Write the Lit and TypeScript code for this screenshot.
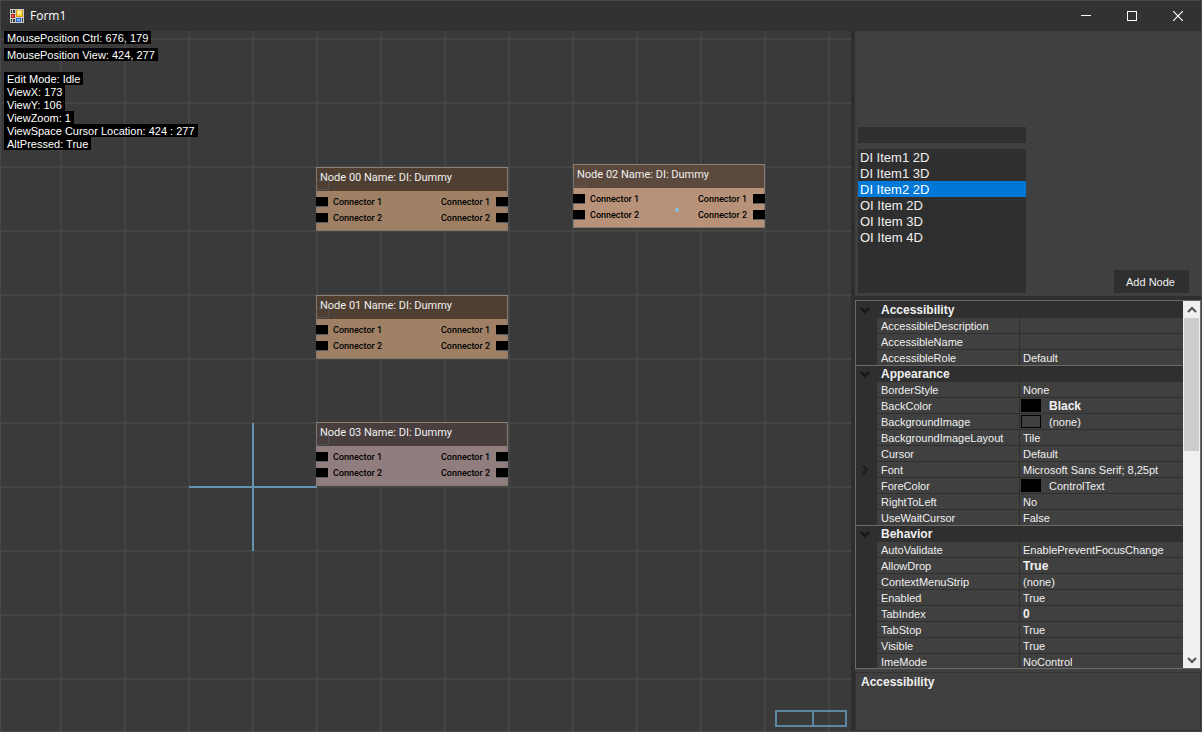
import { LitElement, html, css, svg, nothing } from "lit";
import { customElement, property } from "lit/decorators.js";
import { styleMap } from "lit/directives/style-map.js";

interface Prop {
  name: string;
  value: string;
  bold?: boolean;
  swatch?: string;
  expandable?: boolean;
}

interface Category {
  title: string;
  props: Prop[];
}

const CATEGORIES: Category[] = [
  {
    title: "Accessibility",
    props: [
      { name: "AccessibleDescription", value: "" },
      { name: "AccessibleName", value: "" },
      { name: "AccessibleRole", value: "Default" },
    ],
  },
  {
    title: "Appearance",
    props: [
      { name: "BorderStyle", value: "None" },
      { name: "BackColor", value: "Black", bold: true, swatch: "#000000" },
      { name: "BackgroundImage", value: "(none)", swatch: "transparent" },
      { name: "BackgroundImageLayout", value: "Tile" },
      { name: "Cursor", value: "Default" },
      { name: "Font", value: "Microsoft Sans Serif; 8,25pt", expandable: true },
      { name: "ForeColor", value: "ControlText", swatch: "#000000" },
      { name: "RightToLeft", value: "No" },
      { name: "UseWaitCursor", value: "False" },
    ],
  },
  {
    title: "Behavior",
    props: [
      { name: "AutoValidate", value: "EnablePreventFocusChange" },
      { name: "AllowDrop", value: "True", bold: true },
      { name: "ContextMenuStrip", value: "(none)" },
      { name: "Enabled", value: "True" },
      { name: "TabIndex", value: "0", bold: true },
      { name: "TabStop", value: "True" },
      { name: "Visible", value: "True" },
      { name: "ImeMode", value: "NoControl" },
    ],
  },
];

const NODES = [
  { title: "Node 00 Name: DI: Dummy", x: 315, y: 136, head: "#4f3f32", body: "#9f8064" },
  { title: "Node 02 Name: DI: Dummy", x: 572, y: 133, head: "#5c493d", body: "#b89278" },
  { title: "Node 01 Name: DI: Dummy", x: 315, y: 264, head: "#4f3f32", body: "#9f8064" },
  { title: "Node 03 Name: DI: Dummy", x: 315, y: 391, head: "#483e3e", body: "#907d7d" },
];

const ITEMS = ["DI Item1 2D", "DI Item1 3D", "DI Item2 2D", "OI Item 2D", "OI Item 3D", "OI Item 4D"];

const chevron = (d: string, color: string, width = 2) => html`
  <svg width="10" height="10" viewBox="0 0 10 10" aria-hidden="true">
    ${svg`<path d=${d} fill="none" stroke=${color} stroke-width=${width} />`}
  </svg>
`;

const DOWN = "M1 3L5 7L9 3";
const UP = "M1 7L5 3L9 7";
const RIGHT = "M3 1L7 5L3 9";

@customElement("title-bar")
export class TitleBar extends LitElement {
  static styles = css`
    :host {
      display: flex;
      align-items: center;
      height: 30px;
      background: #323232;
      color: #fff;
      font: 12px/16px "Open Sans", "Noto Sans", sans-serif;
    }
    .logo {
      margin: 0 6px 0 9px;
    }
    .title {
      flex: 1;
      margin: 0;
      font: inherit;
    }
    button {
      display: flex;
      align-items: center;
      justify-content: center;
      width: 46px;
      height: 30px;
      padding: 0;
      border: 0;
      background: none;
      color: inherit;
    }
  `;

  render() {
    return html`
      <svg class="logo" width="14" height="14" viewBox="0 0 14 14" aria-hidden="true">
        <rect width="14" height="14" fill="#c9c9c9" />
        <path d="M1 1h1v3H1zM3 1h2v3H3zM1 10h1v3H1zM3 10h2v3H3zM12 9h1v4h-1z" fill="#3a3a3a" />
        <rect x="1" y="5" width="4" height="4" fill="#c7261b" />
        <rect x="2" y="6" width="1" height="2" fill="#f08a7c" />
        <rect x="6" y="1" width="7" height="7" fill="#d99a10" />
        <rect x="7" y="1" width="5" height="6" fill="#ffd24a" />
        <rect x="8" y="2" width="3" height="3" fill="#fff0a8" />
        <rect x="6" y="9" width="5" height="4" fill="#2a63c8" />
        <rect x="7" y="10" width="3" height="2" fill="#7db2f5" />
      </svg>
      <h1 class="title">Form1</h1>
      <button aria-label="Minimize">
        <svg width="10" height="10" viewBox="0 0 10 10"><path d="M0 4.5H10" stroke="currentColor" /></svg>
      </button>
      <button aria-label="Maximize">
        <svg width="10" height="10" viewBox="0 0 10 10">
          <rect x=".5" y=".5" width="9" height="9" fill="none" stroke="currentColor" />
        </svg>
      </button>
      <button aria-label="Close">
        <svg width="10" height="10" viewBox="0 0 10 10">
          <path d="M0 0L10 10M10 0L0 10" stroke="currentColor" stroke-width="1.2" />
        </svg>
      </button>
    `;
  }
}

@customElement("graph-node")
export class GraphNode extends LitElement {
  @property() title = "";
  @property() head = "";
  @property() body = "";

  static styles = css`
    :host {
      display: block;
      width: 192px;
      height: 64px;
    }
    .node {
      position: relative;
      height: 64px;
      box-sizing: border-box;
      border: 1px solid #857b70;
      border-top-color: #8a7e75;
    }
    .head {
      height: 23px;
      padding: 0 3px;
      color: #f0f0f0;
      font: 11px/20px Roboto, "Open Sans", sans-serif;
    }
    .mark {
      position: absolute;
      left: -1px;
      top: 12px;
      width: 11px;
      height: 8px;
      border: 1px solid #5c6670;
      opacity: 0.5;
    }
    .rows {
      display: grid;
      grid-auto-rows: 16px;
      height: 34px;
      padding-top: 3px;
      padding-bottom: 2px;
      margin: 0 -1px;
      font: 500 9px/16px Roboto, "Open Sans", sans-serif;
      color: #000;
    }
    .row {
      display: flex;
      align-items: center;
      gap: 5px;
    }
    .label-out {
      margin-left: auto;
      padding-right: 1px;
    }
    .pin {
      width: 12px;
      height: 10px;
      box-sizing: border-box;
      background: #000;
      border-bottom: 1px solid #5c5f63;
    }
  `;

  render() {
    return html`
      <div class="node" style=${styleMap({ background: this.body })}>
        <div class="head" style=${styleMap({ background: this.head })}>${this.title}</div>
        <div class="mark"></div>
        <div class="rows">
          ${[1, 2].map(
            (n) => html`
              <div class="row">
                <span class="pin"></span>
                <span>Connector ${n}</span>
                <span class="label-out">Connector ${n}</span>
                <span class="pin"></span>
              </div>
            `
          )}
        </div>
      </div>
    `;
  }
}

@customElement("node-canvas")
export class NodeCanvas extends LitElement {
  static styles = css`
    :host {
      display: block;
      position: relative;
      overflow: hidden;
      background-color: #3a3a3a;
      background-image: linear-gradient(to right, #454545 2px, transparent 2px),
        linear-gradient(to bottom, #454545 2px, transparent 2px);
      background-size: 64px 64px;
      background-position: 59px 7px;
    }
    .axis {
      position: absolute;
      left: 188px;
      top: 392px;
    }
    .node {
      position: absolute;
    }
    .cursor {
      position: absolute;
      left: 674px;
      top: 177px;
      width: 4px;
      height: 4px;
      border-radius: 2px;
      background: #85c0e2;
    }
    .debug {
      position: absolute;
      left: 3px;
      top: 0;
      display: flex;
      flex-direction: column;
      align-items: flex-start;
      font: 11px/11px "Liberation Sans", Arial, sans-serif;
      color: #fff;
    }
    .debug span {
      padding: 2px 3px 0;
      background: #000;
    }
    .mouse {
      display: flex;
      flex-direction: column;
      align-items: flex-start;
      gap: 4px;
      margin-bottom: 11px;
    }
    .overview {
      position: absolute;
      right: 4px;
      bottom: 4px;
      display: flex;
      width: 72px;
      height: 17px;
      box-sizing: border-box;
      border: 2px solid #5b87a3;
    }
    .overview-page {
      width: 35px;
      border-right: 2px solid #5b87a3;
    }
  `;

  render() {
    return html`
      <svg class="axis" width="128" height="128" viewBox="0 0 128 128" aria-hidden="true">
        <path d="M64 0V128M0 64H128" stroke="#6594b3" stroke-width="2" />
      </svg>
      ${NODES.map(
        (n) => html`
          <graph-node
            class="node"
            style=${styleMap({ left: `${n.x}px`, top: `${n.y}px` })}
            .title=${n.title}
            .head=${n.head}
            .body=${n.body}
          ></graph-node>
        `
      )}
      <div class="cursor"></div>
      <div class="debug">
        <div class="mouse">
          <span>MousePosition Ctrl: 676, 179</span>
          <span>MousePosition View: 424, 277</span>
        </div>
        <span>Edit Mode: Idle</span>
        <span>ViewX: 173</span>
        <span>ViewY: 106</span>
        <span>ViewZoom: 1</span>
        <span>ViewSpace Cursor Location: 424 : 277</span>
        <span>AltPressed: True</span>
      </div>
      <div class="overview"><div class="overview-page"></div></div>
    `;
  }
}

@customElement("node-picker")
export class NodePicker extends LitElement {
  static styles = css`
    :host {
      display: flex;
      align-items: flex-end;
      justify-content: space-between;
      height: 265px;
      box-sizing: border-box;
      padding: 3px 12px 3px 3px;
      background: #404040;
      font: 13px/16px "Liberation Sans", Arial, sans-serif;
      color: #f0f0f0;
    }
    .choices {
      display: flex;
      flex-direction: column;
      gap: 6px;
      width: 168px;
    }
    input {
      height: 16px;
      box-sizing: border-box;
      padding: 0 2px;
      border: 0;
      background: #2f2f2f;
      color: inherit;
      font: inherit;
    }
    select {
      height: 144px;
      padding: 0;
      border: 0;
      border-radius: 0;
      overflow: hidden;
      background: #2f2f2f;
      color: inherit;
      font: inherit;
      outline: 0;
    }
    option {
      box-sizing: border-box;
      height: 16px;
      min-height: 16px;
      padding: 1px 2px 0;
      line-height: 15px;
      color: #f0f0f0;
    }
    option:checked {
      background: #0078d7 linear-gradient(#0078d7, #0078d7);
      color: #fff;
    }
    button {
      width: 75px;
      height: 23px;
      padding: 1px 2px 0 0;
      border: 0;
      background: #2f2f2f;
      color: inherit;
      font: 11px/15px "Liberation Sans", Arial, sans-serif;
    }
  `;

  render() {
    return html`
      <div class="choices">
        <input type="text" aria-label="Filter" />
        <select size="9" aria-label="Node types">
          ${ITEMS.map((t) => html`<option ?selected=${t === "DI Item2 2D"}>${t}</option>`)}
        </select>
      </div>
      <button>Add Node</button>
    `;
  }
}

@customElement("property-grid")
export class PropertyGrid extends LitElement {
  static styles = css`
    :host {
      display: flex;
      flex-direction: column;
      gap: 3px;
      min-height: 0;
      background: #404040;
      color: #f0f0f0;
      font: 11px/13px "Liberation Sans", Arial, sans-serif;
    }
    .frame {
      display: flex;
      flex: 1;
      min-height: 0;
      border: 1px solid #6b6b6b;
      background: #2f2f2f;
    }
    .view {
      flex: 1;
      overflow: hidden;
      padding-top: 1px;
    }
    table {
      width: 100%;
      table-layout: fixed;
      border-collapse: separate;
      border-spacing: 0;
    }
    .col-gutter {
      width: 21px;
    }
    .col-name {
      width: 143px;
    }
    th,
    td {
      height: 13px;
      padding: 2px 3px 0;
      border-bottom: 1px solid #2f2f2f;
      text-align: left;
      font-weight: normal;
      white-space: nowrap;
      background: #404040;
    }
    .name {
      padding-left: 4px;
      border-right: 1px solid #2f2f2f;
    }
    .gutter,
    .category {
      background: #2f2f2f;
    }
    .gutter {
      height: 15px;
      padding: 0 4px;
      line-height: 0;
    }
    .category {
      padding-left: 4px;
    }
    .category,
    .bold {
      font-weight: bold;
      font-size: 12px;
    }
    .last > * {
      border-bottom-color: #6b6b6b;
    }
    .with-swatch {
      height: 15px;
      padding: 0 0 0 1px;
    }
    .cell {
      display: flex;
      align-items: center;
      gap: 8px;
      height: 15px;
    }
    .swatch {
      width: 20px;
      height: 13px;
      box-sizing: border-box;
      border: 1px solid #000;
    }
    .swatch-label {
      padding-top: 2px;
    }
    .scrollbar {
      display: flex;
      flex-direction: column;
      width: 17px;
      background: #f0f0f0;
    }
    .arrow {
      display: flex;
      align-items: center;
      justify-content: center;
      height: 17px;
      padding: 0;
      border: 0;
      background: none;
    }
    .track {
      flex: 1;
      padding: 0 1px;
    }
    .thumb {
      height: 40%;
      background: #cdcdcd;
    }
    .help {
      height: 59px;
      box-sizing: border-box;
      padding: 2px 5px;
      border: 1px solid #323232;
    }
    .help-title {
      margin: 0;
      font-size: 12px;
      line-height: 15px;
    }
  `;

  render() {
    return html`
      <div class="frame">
        <div class="view">
          <table>
            <colgroup>
              <col class="col-gutter" />
              <col class="col-name" />
              <col />
            </colgroup>
            ${CATEGORIES.map(
              (c) => html`
                <tbody>
                  <tr>
                    <td class="gutter">${chevron(DOWN, "#151515")}</td>
                    <th class="category" colspan="2">${c.title}</th>
                  </tr>
                  ${c.props.map((p, i) => this.renderProp(p, i === c.props.length - 1))}
                </tbody>
              `
            )}
          </table>
        </div>
        <div class="scrollbar">
          <button class="arrow" aria-label="Scroll up">${chevron(UP, "#505050")}</button>
          <div class="track"><div class="thumb"></div></div>
          <button class="arrow" aria-label="Scroll down">${chevron(DOWN, "#505050")}</button>
        </div>
      </div>
      <div class="help"><h2 class="help-title">Accessibility</h2></div>
    `;
  }

  private renderProp(p: Prop, last: boolean) {
    return html`
      <tr class=${last ? "last" : ""}>
        <td class="gutter">${p.expandable ? chevron(RIGHT, "#1c1c1c") : nothing}</td>
        <th class="name" scope="row">${p.name}</th>
        <td class="${p.bold ? "bold" : ""} ${p.swatch ? "with-swatch" : ""}">
          ${p.swatch
            ? html`<div class="cell">
                <span class="swatch" style=${styleMap({ background: p.swatch })}></span>
                <span class="swatch-label">${p.value}</span>
              </div>`
            : p.value}
        </td>
      </tr>
    `;
  }
}

@customElement("app-root")
export class AppRoot extends LitElement {
  static styles = css`
    :host {
      display: flex;
      flex-direction: column;
      height: 100vh;
      box-sizing: border-box;
      border: 1px solid #474747;
      background: #2f2f2f;
      overflow: hidden;
    }
    .work {
      display: grid;
      grid-template-columns: minmax(0, 1fr) 346px;
      column-gap: 4px;
      flex: 1;
      min-height: 0;
    }
    .side {
      display: flex;
      flex-direction: column;
      gap: 4px;
      min-height: 0;
    }
    .grid {
      flex: 1;
    }
  `;

  render() {
    return html`
      <title-bar></title-bar>
      <div class="work">
        <node-canvas></node-canvas>
        <div class="side">
          <node-picker></node-picker>
          <property-grid class="grid"></property-grid>
        </div>
      </div>
    `;
  }
}
